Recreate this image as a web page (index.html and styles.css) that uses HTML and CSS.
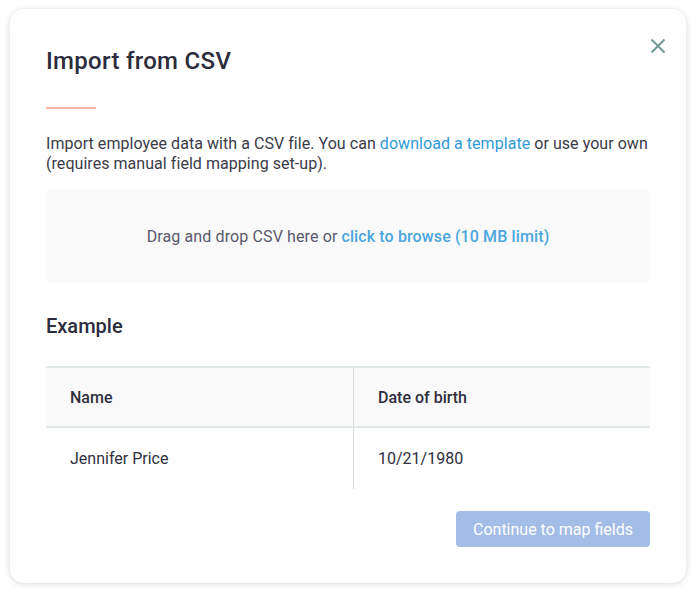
FILE: index.html
```html
<!DOCTYPE html>
<html>
<head>
<meta charset="utf-8">
<link rel="stylesheet" href="styles.css">
</head>
<body>
<div class="modal">
  <button class="close" aria-label="Close">
    <svg width="16" height="16" viewBox="0 0 16 16"><path d="M1.5 1.5L14.5 14.5M14.5 1.5L1.5 14.5" stroke="#6f9893" stroke-width="1.8" fill="none"/></svg>
  </button>
  <h1 class="title">Import from CSV</h1>
  <div class="rule"></div>
  <p class="intro">Import employee data with a CSV file. You can <a class="link">download a template</a> or use your own (requires manual field mapping set-up).</p>
  <div class="drop">Drag and drop CSV here or <span class="browse">click to browse (10 MB limit)</span></div>
  <h2 class="subtitle">Example</h2>
  <div class="table">
    <div class="cell head">Name</div>
    <div class="cell head divider">Date of birth</div>
    <div class="cell">Jennifer Price</div>
    <div class="cell divider">10/21/1980</div>
  </div>
  <div class="actions">
    <button class="primary">Continue to map fields</button>
  </div>
</div>
</body>
</html>
```
FILE: styles.css
```css
html, body {
  margin: 0;
  padding: 0;
  background: #ffffff;
}
body {
  padding: 9px 10px;
  font-family: "Roboto", "Liberation Sans", sans-serif;
  color: #2e2f3e;
}
.modal {
  position: relative;
  width: 676px;
  box-sizing: border-box;
  padding: 36px 36px 36px;
  background: #fff;
  border-radius: 14px;
  box-shadow: 0 1px 6px rgba(0,0,0,0.16);
}
.close {
  position: absolute;
  top: 29px;
  right: 20px;
  background: none;
  border: 0;
  padding: 0;
  width: 16px;
  height: 16px;
}
.title {
  margin: 0;
  font-size: 24px;
  line-height: 32px;
  font-weight: 500;
  letter-spacing: 0.3px;
  color: #2b2c3c;
}
.rule {
  width: 50px;
  height: 2px;
  background: #f8b5a5;
  margin-top: 30px;
}
.intro {
  margin: 25px 0 0;
  font-size: 16px;
  line-height: 20px;
  letter-spacing: 0.05px;
  color: #3a3b48;
}
.link {
  color: #2f9ad8;
}
.drop {
  margin-top: 15px;
  height: 94px;
  background: #f9f9fa;
  border-radius: 4px;
  display: flex;
  align-items: center;
  justify-content: center;
  font-size: 16px;
  letter-spacing: 0.12px;
  color: #595a6e;
}
.browse {
  color: #4aa6dc;
  font-weight: 500;
  margin-left: 4px;
}
.subtitle {
  margin: 29px 0 0;
  font-size: 20px;
  line-height: 28px;
  font-weight: 500;
  color: #2b2c3c;
}
.table {
  margin-top: 26px;
  display: grid;
  grid-template-columns: 307px 1fr;
  border-top: 2px solid #e1e9e7;
}
.cell {
  height: 61px;
  display: flex;
  align-items: center;
  padding-left: 24px;
  font-size: 16px;
  color: #2e2f3e;
}
.cell.head {
  background: #f9f9f9;
  font-weight: 500;
  height: 58px;
  border-bottom: 2px solid #e1e9e7;
}
.divider {
  border-left: 1px solid #d4dfdc;
}
.actions {
  display: flex;
  justify-content: flex-end;
  margin-top: 22px;
}
.primary {
  height: 36px;
  width: 194px;
  border: 0;
  border-radius: 4px;
  background: #a4bde6;
  color: #fff;
  font-family: inherit;
  font-size: 16px;
}
```
